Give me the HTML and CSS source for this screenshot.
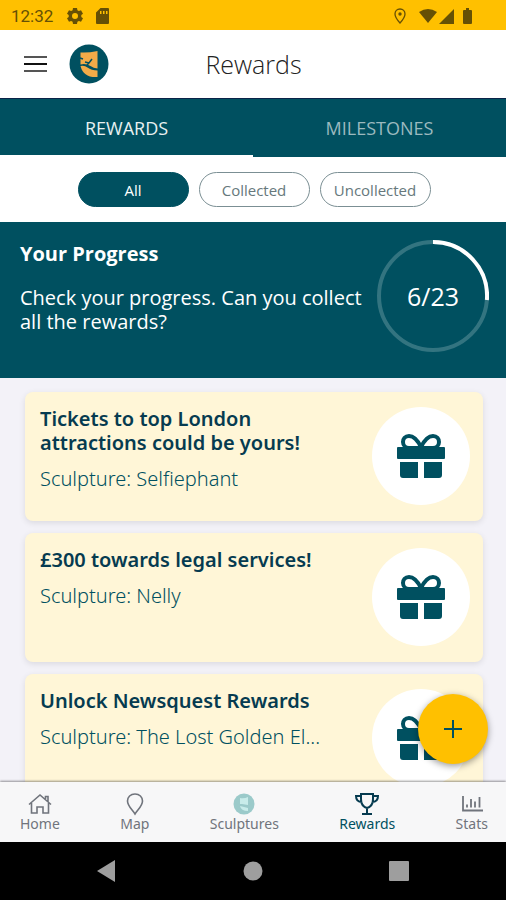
FILE: index.html
```html
<!DOCTYPE html>
<html lang="en">
<head>
<meta charset="utf-8">
<meta name="viewport" content="width=device-width, initial-scale=1">
<title>Rewards</title>
<link rel="stylesheet" href="styles.css">
</head>
<body>
<svg class="defs">
  <symbol id="gift" viewBox="0 0 50 44">
    <path d="M25 13C21 5 17 2 13 2c-4 0-6 3-6 6 0 4 3 6 6 6h24c3 0 6-2 6-6 0-3-2-6-6-6-4 0-8 3-12 11Z" fill="none" stroke="currentColor" stroke-width="4"/>
    <path d="M2 13h46q1 0 1 1v10q0 1-1 1H2q-1 0-1-1V14q0-1 1-1ZM4 28h18v16H7q-3 0-3-3ZM28 28h18v13q0 3-3 3H28Z" fill="currentColor"/>
  </symbol>
</svg>
<div class="app">
  <div class="status">
    <span class="clock">12:32</span>
    <svg class="status-gear" viewBox="0 0 16 16" width="16" height="16"><path fill-rule="evenodd" d="m6 0-.4 2.200-1.500.9L2 2.300 0 5.700l1.700 1.400v1.800L0 10.300l2 3.400 2.100-.8 1.500.9L6 16h4l.4-2.200 1.500-.9 2.100.8 2-3.400-1.700-1.400V7.100L16 5.700l-2-3.400-2.100.8-1.500-.9L10 0ZM8 5a3 3 0 1 1 0 6 3 3 0 0 1 0-6Z" fill="currentColor"/></svg>
    <svg viewBox="0 0 13 16" width="13" height="16"><path fill-rule="evenodd" d="M4.500 0H12q1 0 1 1v14q0 1-1 1H1q-1 0-1-1V4.500ZM4 3v3h1.500V3Zm3 0v3h1.500V3Zm3 0v3h1.500V3Z" fill="currentColor"/></svg>
    <div class="status-right">
      <svg viewBox="0 0 12 16" width="12" height="16"><path d="M6 1C3 1 1 3 1 6c0 3.500 5 9 5 9s5-5.500 5-9c0-3-2-5-5-5Z" fill="none" stroke="currentColor" stroke-width="1.300"/><circle cx="6" cy="6" r="1.700" fill="currentColor"/></svg>
      <svg class="wifi" viewBox="0 0 18 14" width="18" height="14"><path d="M0 3q9-6 18 0L9 14Z" fill="currentColor"/></svg>
      <svg viewBox="0 0 15 15" width="15" height="15"><path d="M15 0v15H0Z" fill="currentColor"/></svg>
      <svg class="battery" viewBox="0 0 9 16" width="9" height="16"><path d="M3 0h3v2h2q1 0 1 1v12q0 1-1 1H1q-1 0-1-1V3q0-1 1-1h2Z" fill="currentColor"/></svg>
    </div>
  </div>

  <header class="header">
    <button class="menu" aria-label="Menu"><span></span><span></span><span></span></button>
    <svg class="logo" viewBox="0 0 40 40" width="40" height="40"><circle cx="20" cy="20" r="19.500" fill="#005060"/><path d="M11.500 8.500q8 .5 17-1.500v17.500q-4-.5-7-2.500-5-3-10-1.500Z" fill="#f3ab48"/><path d="M11.500 22q4-1 7 1.500 4 3 10 3V33q-14 1-17-11Z" fill="#f3ab48"/><path d="m16 18 4 1 3-4M20 19l-2 2M11 14l3 1" fill="none" stroke="#005060" stroke-width="1.500"/></svg>
    <h1>Rewards</h1>
  </header>

  <nav class="tabs">
    <button class="tab active">REWARDS</button>
    <button class="tab">MILESTONES</button>
  </nav>

  <div class="filters">
    <button class="chip selected">All</button>
    <button class="chip">Collected</button>
    <button class="chip">Uncollected</button>
  </div>

  <section class="progress">
    <div class="progress-text">
      <h2>Your Progress</h2>
      <p>Check your progress. Can you collect all the rewards?</p>
    </div>
    <div class="ring">
      <svg viewBox="0 0 112 112" width="112" height="112"><circle cx="56" cy="56" r="54" fill="none" stroke="#337480" stroke-width="4"/><path d="M56 2A54 54 0 0 1 109.900 60" fill="none" stroke="#fff" stroke-width="4"/></svg>
      <span>6/23</span>
    </div>
  </section>

  <main class="list">
    <article class="card">
      <div class="card-text"><h3>Tickets to top London attractions could be yours!</h3><p>Sculpture: Selfiephant</p></div>
      <div class="badge"><svg width="50" height="44"><use href="#gift"/></svg></div>
    </article>
    <article class="card">
      <div class="card-text"><h3>£300 towards legal services!</h3><p>Sculpture: Nelly</p></div>
      <div class="badge"><svg width="50" height="44"><use href="#gift"/></svg></div>
    </article>
    <article class="card">
      <div class="card-text"><h3>Unlock Newsquest Rewards</h3><p>Sculpture: The Lost Golden El...</p></div>
      <div class="badge"><svg width="50" height="44"><use href="#gift"/></svg></div>
    </article>
  </main>

  <footer class="bottom">
    <button class="fab" aria-label="Add"><svg viewBox="0 0 18 18" width="18" height="18"><path d="M9 0v18M0 9h18" stroke="#005060" stroke-width="2"/></svg></button>
    <nav class="bar">
      <a href="#"><svg viewBox="0 0 24 24" width="24" height="24" fill="none" stroke="currentColor" stroke-width="1.600"><path d="M1 12.500 12 3l11 9.500M3.500 11V21H9v-6h6v6h5.500V11M17.500 7V4.500h2.500v5"/></svg>Home</a>
      <a href="#"><svg viewBox="0 0 24 24" width="24" height="24" fill="none" stroke="currentColor" stroke-width="1.600"><path d="M12 2c-4.500 0-7.500 3-7.500 7 0 5 5 9 7.500 13 2.500-4 7.500-8 7.500-13 0-4-3-7-7.500-7Z"/></svg>Map</a>
      <a href="#"><svg viewBox="0 0 24 24" width="24" height="24"><circle cx="12" cy="12" r="10.500" fill="#9bcaca"/><path d="M8 6q4 1 8-1v8l-6-1H8ZM8 14l8 2v3q-7 0-8-5Z" fill="#c8ecea"/></svg>Sculptures</a>
      <a href="#" class="current"><svg viewBox="0 0 24 24" width="24" height="24" fill="none" stroke="currentColor" stroke-width="2"><path d="M6 2h12v5c0 5-2.500 8-6 9-3.500-1-6-4-6-9ZM6 4H1c0 4 2 6 6 6M18 4h5c0 4-2 6-6 6M12 16v6M7 22h10"/></svg>Rewards</a>
      <a href="#"><svg viewBox="0 0 24 24" width="24" height="24" fill="none" stroke="currentColor"><path d="M3 4v14.500h20" stroke-width="1.800"/><path d="M7 15.500v-3M11 15.500V7M15 15.500v-6M19.500 15.500V5" stroke-width="1.800"/></svg>Stats</a>
    </nav>
  </footer>

  <div class="system">
    <button aria-label="Back"><svg viewBox="0 0 20 22" width="20" height="22"><path d="M19 0v22L1 11Z" fill="#9e9e9e"/></svg></button>
    <button aria-label="Home screen"><svg viewBox="0 0 20 20" width="20" height="20"><circle cx="10" cy="10" r="9.500" fill="#9e9e9e"/></svg></button>
    <button aria-label="Recent apps"><svg viewBox="0 0 20 20" width="20" height="20"><rect width="20" height="20" rx="1" fill="#9e9e9e"/></svg></button>
  </div>
</div>
</body>
</html>
```
FILE: styles.css
```css
* { box-sizing: border-box; }
body { margin: 0; font-family: "Open Sans", "Noto Sans", sans-serif; color: #005060; }
h1, h2, h3, p { margin: 0; }
button { font: inherit; color: inherit; border: 0; padding: 0; background: none; }
svg { display: block; }
.defs { display: none; }
.app { display: flex; flex-direction: column; height: 100vh; overflow: hidden; background: #f3f2f8; }
.app > * { flex-shrink: 0; }

.status { display: flex; align-items: center; height: 30px; padding: 2px 34px 0 11px; background: #ffc000; color: #665005; font-family: Roboto, sans-serif; }
.clock { font-size: 17px; }
.status-gear { margin: 0 13px 0 14px; }
.status-right { display: flex; align-items: center; margin-left: auto; }
.wifi { margin: 0 2px 0 13px; }
.battery { margin-left: 9px; }

.header { display: grid; grid-template-columns: 23px 40px 1fr 84px; column-gap: 22px; align-items: center; height: 69px; padding: 0 24px; background: #fff; color: #222; border-bottom: 1px solid #0a2348; }
.menu { display: grid; gap: 5px; }
.menu span { height: 2px; background: #555; }
.menu span:nth-child(2) { background: #111; }
.header h1 { font-size: 25px; font-weight: 300; text-align: center; }

.tabs { display: flex; height: 58px; background: #005060; }
.tab { flex: 1; font-size: 18px; font-weight: 500; color: #9bb9bf; }
.tab.active { color: #e8f0f1; border-bottom: 2px solid #fff; padding-top: 2px; }

.filters { display: flex; justify-content: center; align-items: center; gap: 10px; height: 65px; padding-left: 2px; background: #fff; }
.chip { width: 111px; height: 35px; border: 1px solid #7b8f94; border-radius: 18px; font-size: 15px; color: #66787c; }
.chip.selected { background: #005060; border-color: #005060; color: #fff; }

.progress { display: flex; justify-content: space-between; min-height: 156px; padding: 18px 17px 0 20px; background: #005060; color: #fff; }
.progress-text { width: 350px; font-size: 20px; line-height: 24px; }
.progress h2 { font-size: 20px; line-height: 28px; font-weight: 700; margin-bottom: 18px; }
.ring { display: grid; place-items: center; height: 112px; font-size: 25px; }
.ring > * { grid-area: 1 / 1; }

.list { flex: 1 1 0 !important; min-height: 0; overflow: hidden; padding: 14px 23px 0 25px; }
.card { display: flex; justify-content: space-between; height: 129px; padding: 15px 13px 0 15px; margin-bottom: 12px; border-radius: 8px; background: #fff6d7; box-shadow: 0 2px 6px #0000001a; }
.card-text { width: 300px; padding-right: 10px; white-space: nowrap; font-family: "Noto Sans", sans-serif; line-height: 24px; }
.card h3 { font-size: 20px; font-weight: 600; white-space: normal; color: #063b50; }
.card p { margin-top: 12px; font-size: 20px; font-weight: 300; }
.badge { display: grid; place-items: center; width: 98px; height: 98px; border-radius: 50%; background: #fff; flex-shrink: 0; }

.bottom { position: relative; height: 60px; background: #f7f7f8; box-shadow: 0 -1px 2px #0006; }
.fab { position: absolute; right: 18px; bottom: 78px; display: grid; place-items: center; width: 70px; height: 70px; border-radius: 50%; background: #ffc000; box-shadow: 0 2px 7px #0006; }
.bar { display: flex; justify-content: space-between; padding: 10px 18px 0 20px; }
.bar a { display: flex; flex-direction: column; align-items: center; font-family: "Noto Sans", sans-serif; font-size: 14px; line-height: 16px; color: #70747c; text-decoration: none; }
.bar .current { color: #005060; }
.bar .current svg { color: #063b50; }

.system { display: flex; justify-content: space-between; align-items: center; height: 58px; padding: 0 97px 0 96px; background: #000; }
```
